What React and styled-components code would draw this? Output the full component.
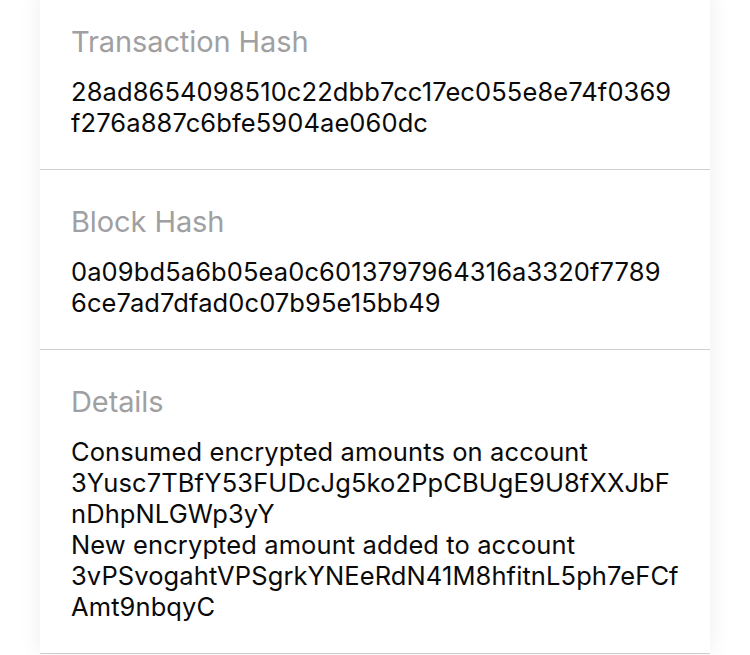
import React from "react";
import styled, { createGlobalStyle } from "styled-components";

const GlobalStyle = createGlobalStyle`
  html, body {
    margin: 0;
    padding: 0;
    background: #ffffff;
    overflow: hidden;
  }
  body {
    font-family: Inter, "Noto Sans", "Liberation Sans", sans-serif;
    -webkit-font-smoothing: antialiased;
  }
`;

const Page = styled.div`
  width: 750px;
  height: 655px;
  overflow: hidden;
  display: flex;
  justify-content: center;
`;

const Card = styled.div`
  width: 670px;
  margin-top: -10px;
  background: #fff;
  box-shadow: 0 0 22px rgba(0, 0, 0, 0.07);
  align-self: flex-start;
`;

const Section = styled.section`
  padding: 34px 31px 31px;
  border-bottom: 1px solid #cfcfd2;
  display: flex;
  flex-direction: column;
  gap: 16px;
`;

const Label = styled.div`
  font-size: 29px;
  line-height: 36px;
  color: #a0a0a2;
  letter-spacing: -0.1px;
`;

const Value = styled.div`
  font-size: 25.5px;
  line-height: 31px;
  color: #0a0a0a;
  letter-spacing: 0.1px;
`;

const Line = styled.span`
  display: block;
  white-space: nowrap;
`;

const rows = [
  {
    label: "Transaction Hash",
    lines: ["28ad8654098510c22dbb7cc17ec055e8e74f0369", "f276a887c6bfe5904ae060dc"],
  },
  {
    label: "Block Hash",
    lines: ["0a09bd5a6b05ea0c6013797964316a3320f7789", "6ce7ad7dfad0c07b95e15bb49"],
  },
  {
    label: "Details",
    lines: [
      "Consumed encrypted amounts on account",
      "3Yusc7TBfY53FUDcJg5ko2PpCBUgE9U8fXXJbF",
      "nDhpNLGWp3yY",
      "New encrypted amount added to account",
      "3vPSvogahtVPSgrkYNEeRdN41M8hfitnL5ph7eFCf",
      "Amt9nbqyC",
    ],
  },
];

export default function App() {
  return (
    <Page>
      <GlobalStyle />
      <Card>
        {rows.map((row) => (
          <Section key={row.label}>
            <Label>{row.label}</Label>
            <Value>
              {row.lines.map((l, i) => (
                <Line key={i}>{l}</Line>
              ))}
            </Value>
          </Section>
        ))}
      </Card>
    </Page>
  );
}
